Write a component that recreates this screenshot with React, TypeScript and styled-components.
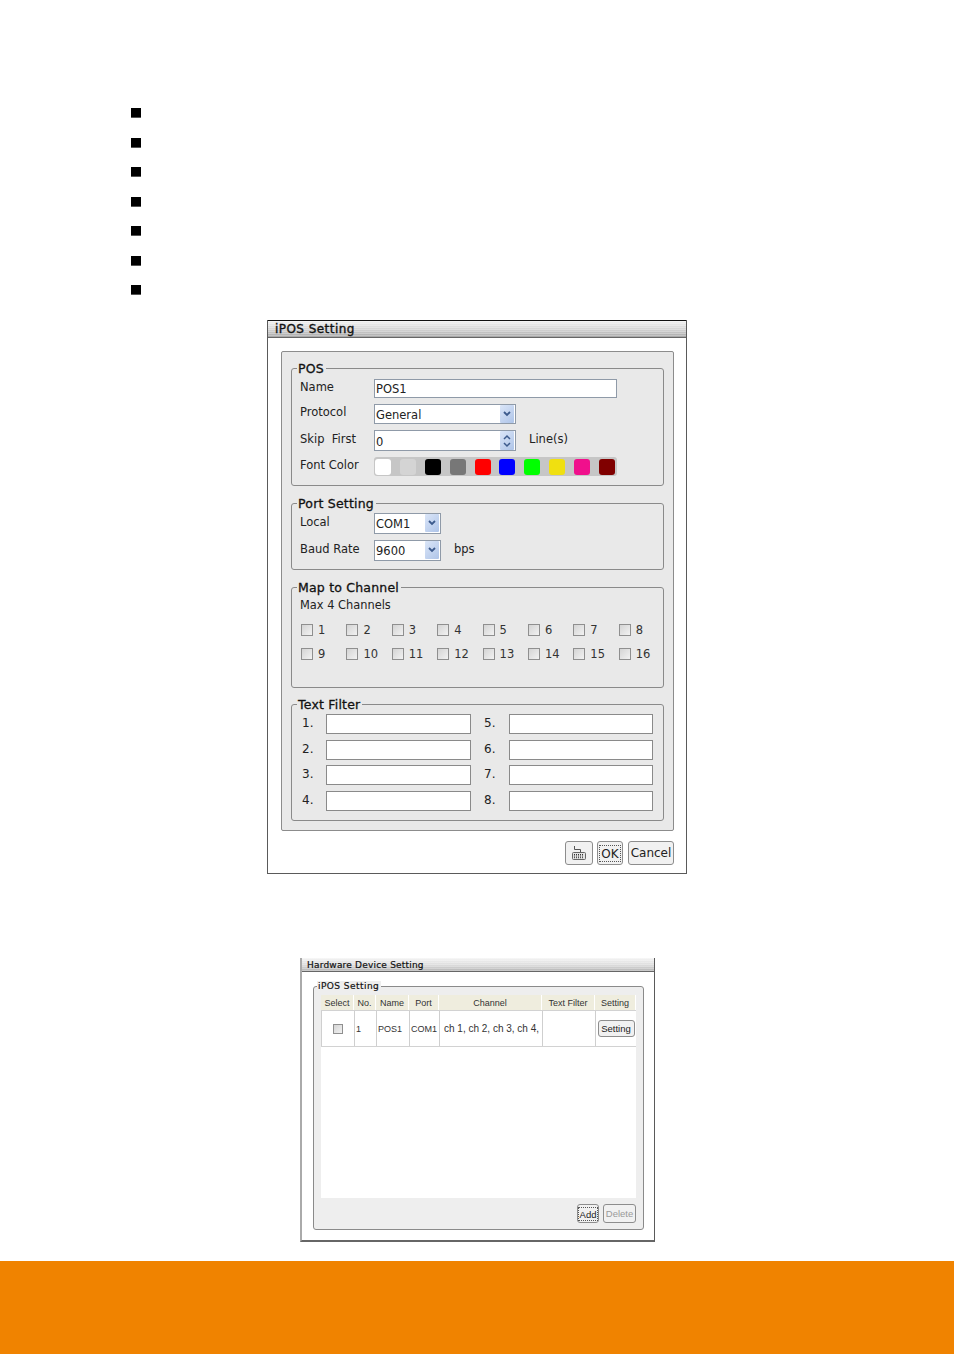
import React from "react";
import styled, { createGlobalStyle } from "styled-components";

const GlobalStyle = createGlobalStyle`
    html, body {
        margin: 0;
        background: #fff;
    }
    * {
        box-sizing: border-box;
    }
`;

const Page = styled.div`
    display: flex;
    flex-direction: column;
    min-height: 1354px;
    font-family: "DejaVu Sans", sans-serif;
    font-size: 11.5px;
    color: #222;
`;

const BulletList = styled.ul`
    display: flex;
    flex-direction: column;
    gap: 19.5px;
    list-style: none;
    margin: 0;
    padding: 108px 0 0 131px;
`;

const Bullet = styled.li`
    width: 10px;
    height: 10px;
    background: #000;
    border-bottom: 1px solid #555;
`;

const Window = styled.section<{ $left: number; $top: number; $width: number; $height: number }>`
    display: flex;
    flex-direction: column;
    width: ${(p) => p.$width}px;
    height: ${(p) => p.$height}px;
    margin: ${(p) => p.$top}px 0 0 ${(p) => p.$left}px;
    border: 1px solid #5a5a5a;
    background: #fff;
`;

const TitleBar = styled.div`
    height: 18px;
    flex: none;
    padding-left: 7px;
    font-size: 12px;
    letter-spacing: 0.45px;
    line-height: 17px;
    -webkit-text-stroke: 0.35px #111;
    color: #111;
    border-top: 1px solid #111;
    border-bottom: 1px solid #666;
    margin-top: -1px;
    background:
        repeating-linear-gradient(180deg, rgba(255, 255, 255, 0.28) 0 1px, rgba(255, 255, 255, 0) 1px 2px),
        linear-gradient(180deg, #f2f2f2, #d2d2d2 55%, #a6a6a6);
`;

const Panel = styled.div`
    display: flex;
    flex-direction: column;
    gap: 17px;
    margin: 13px 12px 0 13px;
    padding: 16px 9px 9px;
    background: #e9e9e9;
    border: 1px solid #8c8c8c;
    border-radius: 2px;
`;

const Group = styled.div<{ $pad: string; $pull?: number }>`
    position: relative;
    margin-top: ${(p) => -(p.$pull ?? 0)}px;
    padding: ${(p) => p.$pad};
    border: 1px solid #8a8a8a;
    border-radius: 3px;
`;

const Legend = styled.span`
    position: absolute;
    top: -8px;
    left: 5px;
    padding: 0 2px 0 1px;
    background: #e9e9e9;
    font-size: 12.5px;
    letter-spacing: 0.2px;
    line-height: 15px;
    color: #111;
    -webkit-text-stroke: 0.3px #111;
`;

const FormRow = styled.div<{ $h: number }>`
    display: flex;
    align-items: center;
    height: ${(p) => p.$h}px;
    margin-bottom: 6px;
    &:last-child {
        margin-bottom: 0;
    }
`;

const RowLabel = styled.span`
    width: 74px;
    flex: none;
    padding-bottom: 4px;
    white-space: pre;
`;

const Field = styled.div<{ $w: number; $lift?: number }>`
    display: flex;
    align-items: flex-end;
    justify-content: space-between;
    width: ${(p) => p.$w}px;
    height: 100%;
    padding: 0 1px ${(p) => p.$lift ?? 0}px 1px;
    background: #fff;
    border: 1px solid #8f9aa8;
    line-height: 16px;
`;

const ArrowButton = styled.span`
    display: flex;
    align-items: center;
    justify-content: center;
    align-self: center;
    width: 14px;
    height: 100%;
    min-height: 17px;
    background: linear-gradient(135deg, #dbe6f8, #aec4e8);
    border-radius: 1px;
`;

const Side = styled.span`
    margin-left: 13px;
    padding-bottom: 3px;
`;

const ColorBar = styled.div`
    display: flex;
    align-items: center;
    gap: 8.9px;
    width: 243px;
    height: 100%;
    padding-left: 1px;
    background: #c6c6c6;
    border-radius: 3px;
`;

const Swatch = styled.span<{ $color: string }>`
    width: 16px;
    height: 16px;
    border-radius: 3px;
    background: ${(p) => p.$color};
`;

const Note = styled.div`
    margin-left: -1px;
    font-size: 11.4px;
    line-height: 14px;
    padding-bottom: 11px;
`;

const ChannelGrid = styled.div`
    display: grid;
    grid-template-columns: repeat(8, 45.4px);
    row-gap: 10px;
`;

const Channel = styled.label`
    display: flex;
    align-items: center;
    gap: 5px;
    height: 14px;
    color: #333;
`;

const CheckBox = styled.span<{ $size: number }>`
    width: ${(p) => p.$size}px;
    height: ${(p) => p.$size}px;
    flex: none;
    border: 1px solid #8f8f8f;
    background: linear-gradient(135deg, #d4d4d4, #f2f2f2);
`;

const FilterGrid = styled.div`
    display: grid;
    grid-auto-flow: column;
    grid-template-rows: repeat(4, 20px);
    grid-template-columns: repeat(2, 170px);
    row-gap: 5.5px;
    column-gap: 12px;
`;

const FilterCell = styled.div`
    display: flex;
    align-items: center;
`;

const FilterLabel = styled.span<{ $w: number }>`
    width: ${(p) => p.$w}px;
    flex: none;
    padding: 0 0 2px 1px;
    font-size: 12px;
`;

const FilterInput = styled.div`
    flex: 1;
    height: 100%;
    background: #fff;
    border: 1px solid #8a8a8a;
`;

const ButtonRow = styled.div<{ $gap: number; $top: number }>`
    display: flex;
    justify-content: flex-end;
    gap: ${(p) => p.$gap}px;
    margin-top: ${(p) => p.$top}px;
`;

const Button = styled.button<{ $w: number; $h?: number; $disabled?: boolean; $small?: boolean }>`
    display: flex;
    align-items: center;
    justify-content: center;
    width: ${(p) => p.$w}px;
    height: ${(p) => p.$h ?? 24}px;
    padding: 0;
    background: #f1f1f1;
    border: 1px solid #8d8d8d;
    border-radius: 3px;
    font-family: ${(p) => (p.$small ? '"Liberation Sans", sans-serif' : '"DejaVu Sans", sans-serif')};
    font-size: ${(p) => (p.$small ? "9.5px" : "12px")};
    color: ${(p) => (p.$disabled ? "#999" : "#222")};
`;

const CancelButton = styled(Button)`
    margin-left: 1px;
`;

const Focus = styled.span`
    padding: 1px 1px 0;
    border: 1px dotted #555;
`;

const ActionRow = styled(ButtonRow)`
    margin-right: 12px;
`;

const SmallTitle = styled(TitleBar)`
    height: 14px;
    margin-top: 0;
    padding-left: 5px;
    font-size: 9px;
    letter-spacing: 0.2px;
    line-height: 14px;
    -webkit-text-stroke: 0.2px #111;
    border-top: none;
    background:
        repeating-linear-gradient(180deg, rgba(255, 255, 255, 0.25) 0 1px, rgba(255, 255, 255, 0) 1px 2px),
        linear-gradient(180deg, #f4f4f4, #dcdcdc 55%, #b4b4b4);
`;

const DeviceWindow = styled(Window)`
    border-top: none;
    border-left: 2px solid #aaa;
    border-bottom: 2px solid #666;
    margin-bottom: 19px;
`;

const DeviceGroup = styled.div`
    position: relative;
    margin: 14px 10px 0 11px;
    padding: 8px 7px 6px;
    background: #eee;
    border: 1px solid #8a8a8a;
    border-radius: 3px;
`;

const DeviceLegend = styled(Legend)`
    top: -6px;
    left: 3px;
    background: #eee;
    font-size: 9px;
    letter-spacing: 0.45px;
    line-height: 11px;
    -webkit-text-stroke: 0.2px #111;
`;

const Table = styled.div`
    height: 203px;
    background: #fff;
    font-family: "Liberation Sans", sans-serif;
    font-size: 9px;
    color: #333;
`;

const TableRow = styled.div<{ $h: number; $head?: boolean }>`
    display: grid;
    grid-template-columns: 33px 22px 33px 30px 103px 53px 41px;
    height: ${(p) => p.$h}px;
    background: ${(p) => (p.$head ? "#efedde" : "#fff")};
    border-bottom: 1px solid #d2d2d2;
`;

const HeadCell = styled.div`
    display: flex;
    align-items: center;
    justify-content: center;
    border-right: 1px solid #fff;
`;

const Cell = styled.div<{ $center?: boolean; $wide?: boolean }>`
    display: flex;
    align-items: center;
    justify-content: ${(p) => (p.$center ? "center" : "flex-start")};
    padding-left: ${(p) => (p.$center ? 0 : p.$wide ? 4 : 1)}px;
    border-left: 1px solid #cfcfcf;
    font-size: ${(p) => (p.$wide ? "10px" : "9px")};
    white-space: nowrap;
`;

const Footer = styled.footer`
    height: 93px;
    margin-top: auto;
    background: #f08300;
`;

const Chevron = () => (
    <svg width="8" height="6" viewBox="0 0 8 6">
        <path d="M1 1l3 3 3-3" fill="none" stroke="#3c5a8c" strokeWidth="1.8" />
    </svg>
);

const SpinArrows = () => (
    <svg width="8" height="14" viewBox="0 0 8 14">
        <path d="M1 5l3-3 3 3M1 9l3 3 3-3" fill="none" stroke="#3c5a8c" strokeWidth="1.5" />
    </svg>
);

const KeyboardIcon = () => (
    <svg width="16" height="16" viewBox="0 0 16 16">
        <path d="M3.5 1v3.5h6V7" fill="none" stroke="#555" />
        <rect x="1.5" y="7.5" width="13" height="7" rx="1" fill="#e4e4e4" stroke="#666" />
        <path d="M3 9.5h10M3 11h10M3 12.7h10" stroke="#333" strokeDasharray="1 1" />
    </svg>
);

const colors = ["#fff", "#d4d4d4", "#000", "#777", "#f00", "#00f", "#0f0", "#f0e010", "#f0108c", "#800000"];
const filters = [1, 2, 3, 4, 5, 6, 7, 8];
const channels = filters.concat([9, 10, 11, 12, 13, 14, 15, 16]);
const columns = ["Select", "No.", "Name", "Port", "Channel", "Text Filter", "Setting"];

export default function App() {
    return (
        <Page>
            <GlobalStyle />
            <BulletList>
                {[0, 1, 2, 3, 4, 5, 6].map((i) => <Bullet key={i} />)}
            </BulletList>

            <Window $left={267} $top={25} $width={420} $height={554}>
                <TitleBar>iPOS Setting</TitleBar>
                <Panel>
                    <Group $pad="10px 8px 9px">
                        <Legend>POS</Legend>
                        <FormRow $h={19}>
                            <RowLabel>Name</RowLabel>
                            <Field $w={243}>POS1</Field>
                        </FormRow>
                        <FormRow $h={20}>
                            <RowLabel>Protocol</RowLabel>
                            <Field $w={142}>General<ArrowButton><Chevron /></ArrowButton></Field>
                        </FormRow>
                        <FormRow $h={21}>
                            <RowLabel>{"Skip  First"}</RowLabel>
                            <Field $w={142}>0<ArrowButton><SpinArrows /></ArrowButton></Field>
                            <Side>Line(s)</Side>
                        </FormRow>
                        <FormRow $h={19}>
                            <RowLabel>Font Color</RowLabel>
                            <ColorBar>
                                {colors.map((c) => <Swatch key={c} $color={c} />)}
                            </ColorBar>
                        </FormRow>
                    </Group>

                    <Group $pad="9px 8px 8px">
                        <Legend>Port Setting</Legend>
                        <FormRow $h={21}>
                            <RowLabel>Local</RowLabel>
                            <Field $w={67} $lift={1}>COM1<ArrowButton><Chevron /></ArrowButton></Field>
                        </FormRow>
                        <FormRow $h={21}>
                            <RowLabel>Baud Rate</RowLabel>
                            <Field $w={67} $lift={1}>9600<ArrowButton><Chevron /></ArrowButton></Field>
                            <Side>bps</Side>
                        </FormRow>
                    </Group>

                    <Group $pad="10px 8px 26px 9px">
                        <Legend>Map to Channel</Legend>
                        <Note>Max 4 Channels</Note>
                        <ChannelGrid>
                            {channels.map((n) => (
                                <Channel key={n}><CheckBox $size={12} />{n}</Channel>
                            ))}
                        </ChannelGrid>
                    </Group>

                    <Group $pad="9px 8px 9.5px 9px" $pull={1}>
                        <Legend>Text Filter</Legend>
                        <FilterGrid>
                            {filters.map((n) => (
                                <FilterCell key={n}>
                                    <FilterLabel $w={n > 4 ? 26 : 25}>{n}.</FilterLabel>
                                    <FilterInput />
                                </FilterCell>
                            ))}
                        </FilterGrid>
                    </Group>
                </Panel>
                <ActionRow $gap={4} $top={10}>
                    <Button $w={28}><KeyboardIcon /></Button>
                    <Button $w={26}><Focus>OK</Focus></Button>
                    <CancelButton $w={46}>Cancel</CancelButton>
                </ActionRow>
            </Window>

            <DeviceWindow $left={300} $top={84} $width={355} $height={284}>
                <SmallTitle>Hardware Device Setting</SmallTitle>
                <DeviceGroup>
                    <DeviceLegend>iPOS Setting</DeviceLegend>
                    <Table>
                        <TableRow $h={16} $head>
                            {columns.map((c) => <HeadCell key={c}>{c}</HeadCell>)}
                        </TableRow>
                        <TableRow $h={36}>
                            <Cell $center><CheckBox $size={10} /></Cell>
                            <Cell>1</Cell>
                            <Cell>POS1</Cell>
                            <Cell>COM1</Cell>
                            <Cell $wide>ch 1, ch 2, ch 3, ch 4,</Cell>
                            <Cell />
                            <Cell $center><Button $w={37} $h={17} $small>Setting</Button></Cell>
                        </TableRow>
                    </Table>
                    <ButtonRow $gap={4} $top={6}>
                        <Button $w={22} $h={19} $small><Focus>Add</Focus></Button>
                        <Button $w={33} $h={19} $small $disabled>Delete</Button>
                    </ButtonRow>
                </DeviceGroup>
            </DeviceWindow>

            <Footer />
        </Page>
    );
}
